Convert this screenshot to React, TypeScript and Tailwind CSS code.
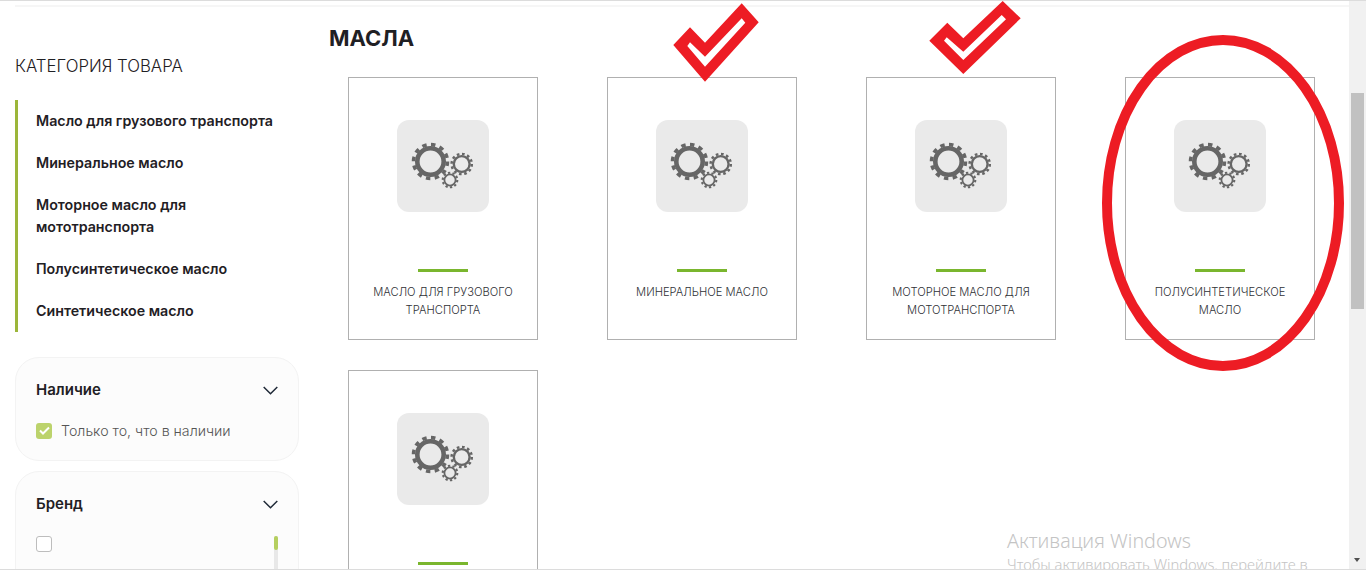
const cards = [
  ["Масло для грузового", "транспорта"],
  ["Минеральное масло"],
  ["Моторное масло для", "мототранспорта"],
  ["Полусинтетическое", "масло"],
  ["Синтетическое масло"],
];

const categories = [
  ["Масло для грузового транспорта"],
  ["Минеральное масло"],
  ["Моторное масло для", "мототранспорта"],
  ["Полусинтетическое масло"],
  ["Синтетическое масло"],
];

function Gear({ cx, cy, r, w, t, teeth }: { cx: number; cy: number; r: number; w: number; t: number; teeth: number }) {
  const tr = r + w / 2 + t / 2;
  const dash = (2 * Math.PI * tr) / teeth / 2;
  return (
    <>
      <circle cx={cx} cy={cy} r={r} fill="none" stroke="#666" strokeWidth={w} />
      <circle cx={cx} cy={cy} r={tr} fill="none" stroke="#666" strokeWidth={t + 0.5} strokeDasharray={`${dash} ${dash}`} />
    </>
  );
}

function GearsTile() {
  return (
    <div className="w-[92px] h-[92px] rounded-xl bg-[#eaeaea] flex items-center justify-center shrink-0">
      <svg width="92" height="92" viewBox="0 0 92 92">
        <Gear cx={33.5} cy={41.5} r={13.2} w={4.6} t={3} teeth={12} />
        <Gear cx={64.7} cy={44} r={7.9} w={2.4} t={2} teeth={12} />
        <Gear cx={53} cy={60} r={5.6} w={1.8} t={1.6} teeth={10} />
      </svg>
    </div>
  );
}

function Card({ lines }: { lines: string[] }) {
  return (
    <div className="w-[190px] h-[263px] border border-[#b0b0b0] flex flex-col items-center pt-[42px] shrink-0">
      <GearsTile />
      <div className="w-[50px] h-[3px] bg-[#7ab62e] mt-[57px] shrink-0" />
      <div className="mt-[11px] text-[11.2px] leading-[18px] uppercase text-center text-[#2f3136] font-light">
        {lines.map((l) => (
          <div key={l}>{l}</div>
        ))}
      </div>
    </div>
  );
}

function Check({ className, w, h, d }: { className: string; w: number; h: number; d: string }) {
  return (
    <svg className={className} width={w} height={h} viewBox={`0 0 ${w} ${h}`}>
      <path fillRule="evenodd" fill="#ed1c24" d={d} />
    </svg>
  );
}

function Chevron() {
  return (
    <svg width="15" height="9" viewBox="0 0 15 9" fill="none" stroke="#1f2937" strokeWidth="1.5">
      <path d="M0.7 1L7.5 7.8L14.3 1" />
    </svg>
  );
}

export default function App() {
  return (
    <div className="relative w-[1366px] h-[570px] overflow-hidden bg-white flex font-['Inter',sans-serif] text-[#1f2024] border-t border-b border-[#dcdcdc]">
      <div className="flex-1 min-w-0 flex flex-col pl-[15px]">
        <div className="mt-[4px] h-[2px] bg-[#f6f6f6] shrink-0" />
        <div className="flex">
          {/* Sidebar */}
          <aside className="w-[284px] shrink-0 flex flex-col pt-[49px]">
            <h3 className="text-[16.8px] leading-5 font-light uppercase whitespace-nowrap">Категория товара</h3>
            <ul className="mt-[24px] border-l-[3px] border-[#9cb63a] py-[10px] pl-[18px] flex flex-col gap-5">
              {categories.map((c) => (
                <li key={c[0]} className="text-[14.25px] leading-[22px] font-semibold">
                  {c.map((l) => (
                    <div key={l}>{l}</div>
                  ))}
                </li>
              ))}
            </ul>

            <section className="mt-[25px] h-[104px] shrink-0 rounded-[24px] border border-[#f3f3f3] bg-[#fcfcfc] px-5 pt-[22px]">
              <div className="flex items-center justify-between h-5">
                <span className="text-[15px] font-semibold">Наличие</span>
                <Chevron />
              </div>
              <label className="flex items-center gap-[9px] mt-[20px]">
                <span className="w-4 h-4 rounded-[3px] bg-[#bcd36c] flex items-center justify-center">
                  <svg width="11" height="9" viewBox="0 0 11 9" fill="none" stroke="#fff" strokeWidth="2">
                    <path d="M1 4.5L4 7.5L10 1.5" />
                  </svg>
                </span>
                <span className="text-[14.2px] font-light text-[#555]">Только то, что в наличии</span>
              </label>
            </section>

            <section className="mt-[10px] h-[200px] shrink-0 rounded-[24px] border border-[#f3f3f3] bg-[#fcfcfc] px-5 pt-[22px]">
              <div className="flex items-center justify-between h-5">
                <span className="text-[15px] font-semibold">Бренд</span>
                <Chevron />
              </div>
              <div className="flex justify-between mt-[22px]">
                <span className="w-4 h-4 rounded-[3px] border border-[#bdbdbd] bg-white" />
                <div className="w-1 h-[120px] bg-[#e8e8e8] rounded-sm">
                  <div className="w-1 h-[14px] bg-[#b5cf5f] rounded-sm" />
                </div>
              </div>
            </section>
          </aside>

          {/* Main */}
          <main className="ml-[30px] flex-1 min-w-0">
            <h1 className="mt-[17px] text-[22px] leading-7 font-bold uppercase">Масла</h1>
            <div className="mt-[25px] ml-[19px] flex flex-wrap gap-x-[69px] gap-y-[30px]">
              {cards.map((c) => (
                <Card key={c[0]} lines={c} />
              ))}
            </div>
          </main>
        </div>
      </div>

      {/* Browser scrollbar */}
      <div className="w-[17px] shrink-0 bg-[#f1f1f1] flex flex-col items-center pt-[92px]">
        <div className="w-[13px] h-[216px] bg-[#c1c1c1]" />
      </div>
      <div className="absolute right-[6px] bottom-[7px] w-0 h-0 border-x-[3px] border-x-transparent border-t-[4px] border-t-[#505050]" />

      {/* Hand drawn marks over the page */}
      <Check
        className="absolute left-[673px] top-[-1px]"
        w={90}
        h={82}
        d="M68.7 3.3L85.7 22.3L32 81.7L0.3 45L17 27.3L32 42.7ZM68.7 18.3L32 56.7L17 42.3L14.3 46L32 66.7L72.3 22.7Z"
      />
      <Check
        className="absolute left-[929px] top-[-1px]"
        w={93}
        h={75}
        d="M73.7 1L91.7 18.3L34.3 74L0.3 40.7L18.3 22.7L34.3 38.3ZM72.7 15L34.3 51.7L17.7 37.3L15 40.7L34.3 60L77 19.3Z"
      />
      <svg className="absolute left-[1100px] top-[32px]" width="248" height="342" viewBox="0 0 248 342">
        <ellipse cx="123" cy="170" rx="116" ry="163" fill="none" stroke="#ed1c24" strokeWidth="10" />
      </svg>

      {/* Windows watermark */}
      <div className="absolute left-[1007px] top-[527px] font-['Noto_Sans',sans-serif] text-[#c4c4c4] font-light">
        <div className="text-[19.7px] leading-[26px]">Активация Windows</div>
        <div className="text-[14.8px] leading-[20px] whitespace-nowrap">Чтобы активировать Windows, перейдите в</div>
      </div>
    </div>
  );
}
